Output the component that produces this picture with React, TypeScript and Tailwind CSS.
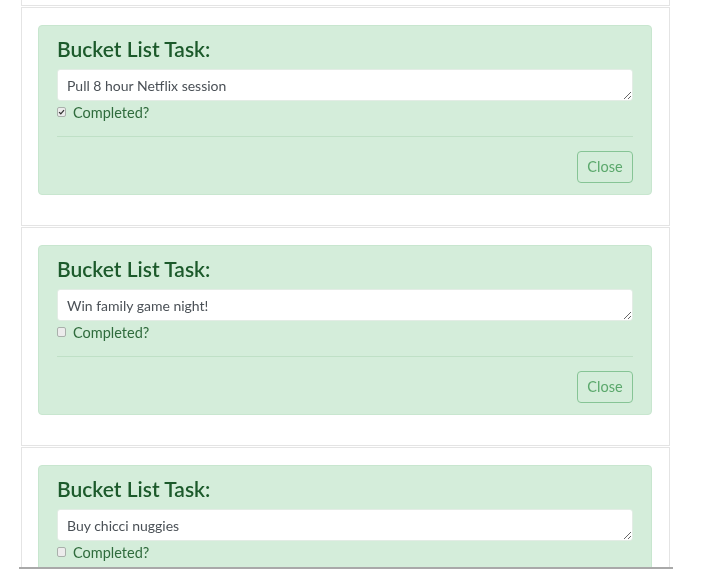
import React from 'react';

interface Task {
  text: string;
  done: boolean;
}

const tasks: Task[] = [
  { text: 'Pull 8 hour Netflix session', done: true },
  { text: 'Win family game night!', done: false },
  { text: 'Buy chicci nuggies', done: false },
];

function Checkbox({ checked }: { checked: boolean }) {
  return (
    <span className="mt-[-2px] flex h-[10px] w-[9px] items-center justify-center rounded-[2px] border border-[#a9b0ab] bg-[#ececec]">
      {checked && (
        <svg viewBox="0 0 10 10" className="h-[8px] w-[8px]">
          <path d="M1.5 5.2 L4 7.6 L8.6 2.2" fill="none" stroke="#333" strokeWidth="1.8" />
        </svg>
      )}
    </span>
  );
}

// the last card is cut by the bottom of the view, so it only shows its top half
function TaskCard({ task, partial }: { task: Task; partial?: boolean }) {
  return (
    <div className="h-[219px] shrink-0 border border-[#e4e4e4] bg-white pl-[16px] pr-[17px] pt-[17px]">
      {/* Alert */}
      <div className="h-[170px] rounded-[4px] border border-[#c8e6cf] bg-[#d4edda] px-[18px] pt-[11px]">
        <h4 className="mb-[8px] text-[21px] font-semibold leading-[24px] text-[#1c5a2b]">
          Bucket List Task:
        </h4>
        <textarea
          readOnly
          defaultValue={task.text}
          className="block h-[32px] w-full rounded-[3px] border border-[#e3ece5] bg-white px-[9px] py-[6px] text-[14px] leading-[20px] text-[#4a5056] outline-none"
        />
        <label className="flex h-[22px] items-center gap-[7px] pt-[2px] text-[14.5px] text-[#2f6b3c]">
          <Checkbox checked={task.done} />
          Completed?
        </label>
        {!partial && (
          <>
            <hr className="mt-[13px] border-0 border-t border-[#bfe0c6]" />
            <div className="mt-[14px] flex justify-end">
              <button className="h-[32px] w-[56px] rounded-[4px] border border-[#86c495] text-[14.5px] text-[#5aa86b]">
                Close
              </button>
            </div>
          </>
        )}
      </div>
    </div>
  );
}

export default function App() {
  return (
    <div
      className="h-[573px] w-[722px] overflow-hidden bg-white"
      style={{ fontFamily: 'Lato, "Open Sans", sans-serif' }}
    >
      <div className="flex h-[567px] w-[670px] flex-col gap-[1px] overflow-hidden pl-[21px]">
        {/* tail of the previous card */}
        <div className="h-[6px] shrink-0 border-x border-b border-[#e4e4e4]" />
        {tasks.map((t, i) => (
          <TaskCard key={t.text} task={t} partial={i === tasks.length - 1} />
        ))}
      </div>
      <div className="ml-[19px] h-[2px] w-[654px] bg-[#a9a9a9]" />
    </div>
  );
}
